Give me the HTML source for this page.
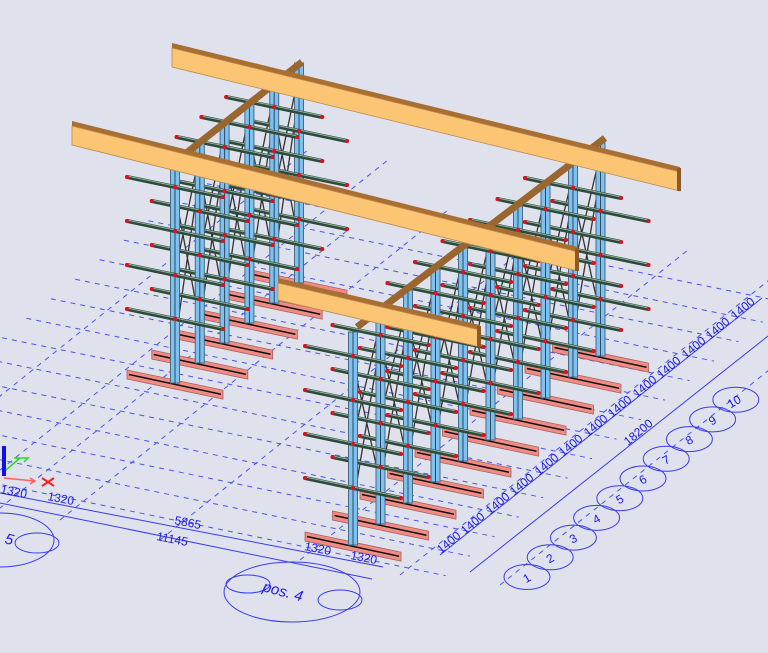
<!DOCTYPE html>
<html><head><meta charset="utf-8"><style>
html,body{margin:0;padding:0;background:#dfe1ec;}
svg{display:block}
text{font-family:"Liberation Sans",sans-serif;fill:#1a1ae6;font-size:12px}
</style></head><body>
<svg id="s" width="768" height="653" viewBox="0 0 768 653" xmlns="http://www.w3.org/2000/svg">
<g id="grid" stroke="#4a55f0" stroke-width="1" fill="none"></g>
<g id="dims" stroke="#3a3af0" stroke-width="1" fill="none">
<line x1="440" y1="555" x2="762" y2="298"/>
<line x1="470" y1="572" x2="768" y2="336"/>
<line x1="0" y1="493" x2="383" y2="567"/>
<line x1="0" y1="503" x2="372" y2="579"/>
<ellipse cx="292" cy="592" rx="68" ry="30"/>
<ellipse cx="248" cy="584" rx="22" ry="9"/>
<ellipse cx="340" cy="600" rx="22" ry="10"/>
<ellipse cx="0" cy="540" rx="54" ry="27"/>
<ellipse cx="37" cy="543" rx="22" ry="10"/>
</g>
<g id="circ" stroke="#3a3af0" fill="none"></g>
<g id="rack"></g>
<g id="beams"></g>
<g>
<text transform="translate(628,446) rotate(-40)">18200</text>
<text transform="translate(441,554) rotate(-40)">1400</text>
<text transform="translate(465,535) rotate(-40)">1400</text>
<text transform="translate(490,515) rotate(-40)">1400</text>
<text transform="translate(514,496) rotate(-40)">1400</text>
<text transform="translate(539,476) rotate(-40)">1400</text>
<text transform="translate(563,457) rotate(-40)">1400</text>
<text transform="translate(588,437) rotate(-40)">1400</text>
<text transform="translate(612,418) rotate(-40)">1400</text>
<text transform="translate(637,398) rotate(-40)">1400</text>
<text transform="translate(661,379) rotate(-40)">1400</text>
<text transform="translate(686,359) rotate(-40)">1400</text>
<text transform="translate(710,340) rotate(-40)">1400</text>
<text transform="translate(735,320) rotate(-40)">1400</text>
<text transform="translate(0,493) rotate(11)">1320</text>
<text transform="translate(47,500) rotate(11)">1320</text>
<text transform="translate(174,524) rotate(11)">5865</text>
<text transform="translate(156,540) rotate(11)">11145</text>
<text transform="translate(304,550) rotate(11)">1320</text>
<text transform="translate(350,559) rotate(11)">1320</text>
<text transform="translate(262,591) rotate(15)" style="font-size:15px;font-style:italic">pos. 4</text>
<text transform="translate(4,543) rotate(15)" style="font-size:15px;font-style:italic">5</text>
<g id="nums" style="font-size:15px"></g>
</g>
<g>
<rect x="2" y="446" width="4" height="30" fill="#1010ee"/>
<path d="M6 470 L20 458 M14 458 L28 458 L24 462" stroke="#22dd22" fill="none" stroke-width="1.5"/>
<path d="M4 478 L34 481 M30 478 L35 481 L30 484" stroke="#ff6060" fill="none" stroke-width="1.5"/>
<path d="M42 478 L54 486 M54 478 L42 486" stroke="#ff2020" stroke-width="2"/>
</g>
</svg>
<script>
var NS="http://www.w3.org/2000/svg";
function el(p,t,a){var e=document.createElementNS(NS,t);for(var k in a)e.setAttribute(k,a[k]);document.getElementById(p).appendChild(e);return e;}
var vx=24.4,vy=-19.5;
for(var i=-1;i<14;i++){var px=440+i*vx,py=550+i*vy;
 el("grid","line",{x1:px-560,y1:py-560*0.205,x2:px+30,y2:py+30*0.205,"stroke-dasharray":"5,5"});}
var starts=[[-40,540],[60,520],[160,540],[300,560],[400,575],[500,585],[0,470],[-80,460]];
starts.forEach(function(s){el("grid","line",{x1:s[0],y1:s[1],x2:s[0]+vx*16,y2:s[1]+vy*16,"stroke-dasharray":"5,5"});});
for(var i=0;i<10;i++){var cx=527+i*23.2,cy=577-i*19.7;
 el("circ","ellipse",{cx:cx,cy:cy,rx:23,ry:12.5});
 var t=el("nums","text",{x:cx-4-(i==9?5:0),y:cy+5,transform:"rotate(-30 "+cx+" "+cy+")"});t.textContent=String(i+1);}
function rack(n,x0,t0,b0,dx,dy,rightExt){
 var g="rack";
 for(var i=n-1;i>=0;i--){var cx=x0+i*dx,by=b0+i*dy;
  el(g,"polygon",{points:(cx-48)+","+(by-13)+" "+(cx+rightExt)+","+(by-13+(rightExt+48)*0.21)+" "+(cx+rightExt)+","+(by-4+(rightExt+48)*0.21)+" "+(cx-48)+","+(by-4),fill:"#f08c84",stroke:"#a86060","stroke-width":0.8});
  el(g,"line",{x1:cx-46,y1:by-8.5,x2:cx+rightExt-2,y2:by-8.5+(rightExt+46)*0.21,stroke:"#111","stroke-width":1.5});}
 for(var i=0;i<n-1;i++){var a=x0+i*dx,b=a+dx,ta=t0+i*dy,tb=ta+dy,ba=b0+i*dy,bb=ba+dy;
  el(g,"path",{d:"M"+a+" "+(ta+30)+"L"+b+" "+(bb-40)+"M"+b+" "+(tb+30)+"L"+a+" "+(ba-40)+"M"+a+" "+(ta+(ba-ta)/2)+"L"+b+" "+(tb+10),stroke:"#333","stroke-width":1.3,fill:"none"});}
 for(var i=n-1;i>=0;i--){var cx=x0+i*dx,top=t0+i*dy,bot=b0+i*dy;
  el(g,"rect",{x:cx-4.5,y:top,width:9,height:bot-top,fill:"#7ec0ee",stroke:"#4a6a80","stroke-width":1});
  el(g,"line",{x1:cx,y1:top,x2:cx,y2:bot,stroke:"#2a4a66","stroke-width":1});
  for(var k=0;k<5;k++){var y=top+24+k*44; if(y>bot-30)break;
   el(g,"line",{x1:cx-48,y1:y-10,x2:cx+48,y2:y+10,stroke:"#2e4a3a","stroke-width":4,"stroke-linecap":"round"});
   el(g,"line",{x1:cx-48,y1:y-11,x2:cx+48,y2:y+9,stroke:"#8fb0a0","stroke-width":1});
   el(g,"circle",{cx:cx-48,cy:y-10,r:2,fill:"#e01020"});
   el(g,"circle",{cx:cx+48,cy:y+10,r:2,fill:"#e01020"});
   el(g,"circle",{cx:cx,cy:y,r:2.2,fill:"#e01020"});}
 }
}
rack(6,175,163,383,24.8,-20,48);
rack(10,353,332,545,27.5,-21,48);
function beam(x1,y1,x2,y2,h){
 el("beams","polygon",{points:x1+","+(y1-5)+" "+(x2)+","+(y2-5)+" "+x2+","+y2+" "+x1+","+y1,fill:"#a86e32"});
 el("beams","polygon",{points:x1+","+y1+" "+x2+","+y2+" "+x2+","+(y2+h)+" "+x1+","+(y1+h),fill:"#fcc574",stroke:"#b88a50","stroke-width":0.8});
 el("beams","rect",{x:x2-3,y:y2-4,width:4,height:h+4,fill:"#8a5a28"});}
el("beams","line",{x1:180,y1:158,x2:302,y2:62,stroke:"#9a6630","stroke-width":7});
el("beams","line",{x1:357,y1:327,x2:605,y2:138,stroke:"#9a6630","stroke-width":7});
beam(172,48,680,172,19);
beam(72,126,578,252,19);
beam(278,283,480,330,17);
</script>
</body></html>
